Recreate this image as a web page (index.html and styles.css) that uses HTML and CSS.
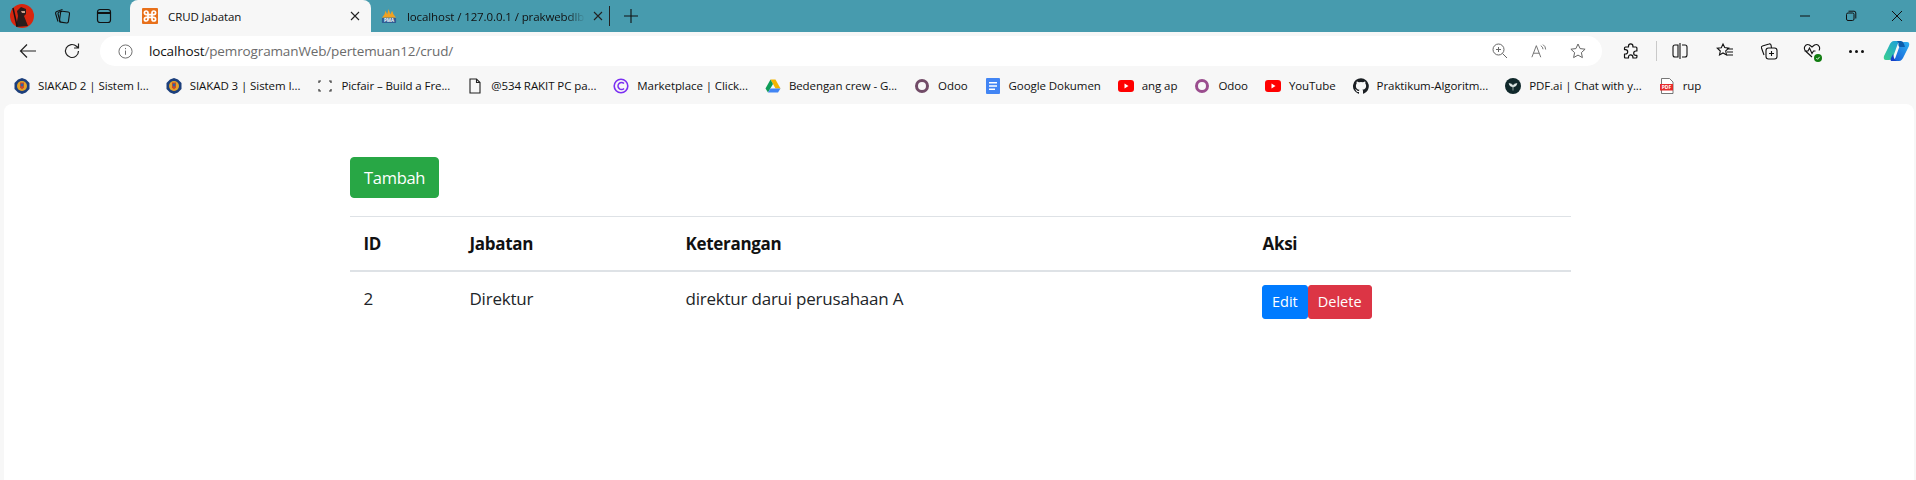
FILE: index.html
```html
<!DOCTYPE html>
<html lang="en">
<head>
  <meta charset="UTF-8" />
  <meta name="viewport" content="width=device-width, initial-scale=1.0"/>
  <title>CRUD Jabatan</title>
  <link rel="stylesheet" href="styles.css">
</head>
<body>

<svg class="defs" width="0" height="0">
  <symbol id="crest" viewBox="0 0 16 16">
    <path d="M8 0 L12 1.5 L15.5 5 L15.5 11 L12 14.5 L8 16 L4 14.5 L.5 11 L.5 5 L4 1.5 Z" fill="#1c3f7c"/>
    <circle cx="8" cy="8" r="5" fill="#e3a32a"/>
    <path d="M6 4.5h4v5l-2 2-2-2z" fill="#c9492b"/>
    <circle cx="8" cy="7" r="1.4" fill="#2a66a8"/>
  </symbol>
  <symbol id="yt" viewBox="0 0 16 16">
    <rect y="2" width="16" height="12" rx="3" fill="#f00"/>
    <path d="M6.5 5.5v5l4-2.5z" fill="#fff"/>
  </symbol>
</svg>

<!-- tab strip -->
<div class="tabstrip">
  <div class="strip-left">
    <svg class="avatar" viewBox="0 0 24 24">
      <circle cx="12" cy="12" r="12" fill="#d8260f"/>
      <path d="M6 23 L8 12 L7 7 L11 3 L16 5 L16 10 L14 12 L18 22 Z" fill="#2a1c1c"/>
      <path d="M3 4 L7 22" stroke="#1b1212" stroke-width="1.5"/>
      <path d="M11 7h4v2h-3z" fill="#c9a08c"/>
    </svg>
    <svg class="ico strip-ico" viewBox="0 0 18 18" fill="none" stroke="#111" stroke-width="1.1">
      <rect x="7" y="4.5" width="9" height="11" rx="1.5" transform="rotate(8 11 10)"/>
      <path d="M5 14.5 L2.6 6.5 Q2.3 5 3.8 4.4 L9.5 2.5"/>
      <path d="M7.3 15.5 L5 7 Q4.8 5.6 6.2 5.1 L9 4.2"/>
    </svg>
    <svg class="ico strip-ico" viewBox="0 0 18 18" fill="none" stroke="#111" stroke-width="1.2">
      <rect x="2.5" y="2.5" width="13" height="13" rx="2.5"/>
      <path d="M2.5 6h13" stroke-width="2"/>
    </svg>
  </div>

  <div class="tab tab-active">
    <svg class="fav" viewBox="0 0 16 16">
      <rect width="16" height="16" rx="1" fill="#e8701a"/>
      <path d="M6 6V4.800a1.800 1.800 0 1 0-1.800 1.800H11.800a1.800 1.800 0 1 0-1.800-1.800V11.200a1.800 1.800 0 1 0 1.800-1.800H4.200a1.800 1.800 0 1 0 1.800 1.800z" fill="none" stroke="#fff" stroke-width="1.700"/>
    </svg>
    <span class="tab-title">CRUD Jabatan</span>
    <svg class="tab-x" viewBox="0 0 10 10" stroke="#222" stroke-width="1.1"><path d="M1 1l8 8M9 1l-8 8"/></svg>
  </div>

  <div class="tab tab-other">
    <svg class="fav" viewBox="0 0 18 16">
      <path d="M1 10 L4 6 L5 2 L7 6 L8.5 0 L10.5 6 L12.5 2 L14 6 L17 10 Z" fill="#f0a221"/>
      <rect x="1" y="10" width="16" height="6" rx="1" fill="#2f5d94"/>
      <text x="9" y="15" class="pma">PMA</text>
    </svg>
    <span class="tab-title tab-fade">localhost / 127.0.0.1 / prakwebdlb</span>
    <svg class="tab-x" viewBox="0 0 10 10" stroke="#222" stroke-width="1.1"><path d="M1 1l8 8M9 1l-8 8"/></svg>
  </div>

  <div class="tab-sep"></div>
  <svg class="ico new-tab" viewBox="0 0 16 16" stroke="#111" stroke-width="1.1"><path d="M8 1v14M1 8h14"/></svg>

  <div class="winctl">
    <svg class="ico" viewBox="0 0 12 12" stroke="#111" stroke-width="1"><path d="M1 6h10"/></svg>
    <svg class="ico" viewBox="0 0 12 12" fill="none" stroke="#111" stroke-width="1">
      <rect x="1.5" y="3" width="7.5" height="7.5" rx="1.5"/>
      <path d="M3.5 1.2h5.5q1.8 0 1.8 1.8v5.5"/>
    </svg>
    <svg class="ico" viewBox="0 0 12 12" stroke="#111" stroke-width="1"><path d="M1 1l10 10M11 1l-10 10"/></svg>
  </div>
</div>

<!-- toolbar -->
<div class="toolbar">
  <svg class="ico nav-ico" viewBox="0 0 18 18" fill="none" stroke="#222" stroke-width="1.2"><path d="M17 9H1.5M8 2.5L1.5 9 8 15.5"/></svg>
  <svg class="ico nav-ico" viewBox="0 0 18 18" fill="none" stroke="#222" stroke-width="1.2"><path d="M15.5 9a6.5 6.5 0 1 1-2-4.7L15.5 6M15.5 1.5V6H11"/></svg>

  <div class="addressbar">
    <svg class="ico info" viewBox="0 0 16 16" fill="none" stroke="#666" stroke-width="1"><circle cx="8" cy="8" r="7"/><path d="M8 7v4.5M8 4.2v1.3"/></svg>
    <div class="url"><span class="host">localhost</span>/pemrogramanWeb/pertemuan12/crud/</div>
    <div class="addr-icons">
      <svg class="ico" viewBox="0 0 16 16" fill="none" stroke="#666" stroke-width="1"><circle cx="6.5" cy="6.5" r="5.5"/><path d="M10.5 10.5L15 15M6.5 4v5M4 6.5h5"/></svg>
      <svg class="ico" viewBox="0 0 18 16" fill="none" stroke="#666" stroke-width="1"><path d="M1 15L6 2l5 13M2.8 10.5h6.4"/><path d="M11 2q2.5 1.5 2.5 4M13.5 .8q3 2 3 5.5"/></svg>
      <svg class="ico" viewBox="0 0 16 16" fill="none" stroke="#666" stroke-width="1"><path d="M8 1l2.1 4.6 5 .6-3.7 3.4 1 5L8 12.1l-4.4 2.5 1-5L.9 6.2l5-.6z"/></svg>
    </div>
  </div>

  <div class="tools">
    <svg class="ico tool-ext" viewBox="0 0 18 18" fill="none" stroke="#111" stroke-width="1.2" stroke-linejoin="round"><path d="M6.500 4a2.200 2.200 0 0 1 4.400 0v1h3q1 0 1 1v3h-1a2.200 2.200 0 0 0 0 4.400h1v1.600q0 1-1 1h-3v-1a2.200 2.200 0 0 0-4.400 0v1h-3q-1 0-1-1v-3h1a2.200 2.200 0 0 0 0-4.400h-1V6q0-1 1-1h3z"/></svg>
    <div class="tool-sep"></div>
    <svg class="ico tool-split" viewBox="0 0 18 18" fill="none" stroke="#111" stroke-width="1.1"><path d="M7 3H4Q2 3 2 5v8q0 2 2 2h3zM9 1v16M11 3h3q2 0 2 2v8q0 2-2 2h-3"/></svg>
    <svg class="ico tool-fav" viewBox="0 0 18 18" fill="none" stroke="#111" stroke-width="1.1"><path d="M7 2l1.700 3.600 4 .5-3 2.800.8 4L7 11l-3.500 2 .8-4-3-2.800 4-.5zM11 7h6M11 10h6M10 13h7"/></svg>
    <svg class="ico tool-col" viewBox="0 0 18 18" fill="none" stroke="#111" stroke-width="1.1"><rect x="6" y="6" width="11" height="11" rx="2.500"/><path d="M11.500 9v5M9 11.500h5M4 13L1.500 6Q1 4.500 2.500 4L9 2q1.500-.5 2 1l.5 3"/></svg>
    <span class="tool-health">
      <svg class="ico" viewBox="0 0 18 18" fill="none" stroke="#111" stroke-width="1.1"><path d="M9 15L3 9.500Q.5 7 1.800 4.500 3.500 1.500 6.500 3L9 5l2.500-2q3-1.500 4.700 1.500 1 2-.2 4M1.500 9H5l1.500-3L9 11.500l1.500-2.500h2"/></svg>
      <svg class="health-dot" viewBox="0 0 8 8"><circle cx="4" cy="4" r="4" fill="#107c10"/><path d="M2.300 4.100l1.200 1.200 2.200-2.500" fill="none" stroke="#fff" stroke-width=".9"/></svg>
    </span>
    <span class="tool-more"><i></i><i></i><i></i></span>
    <svg class="copilot" viewBox="0 0 27 22">
      <defs>
        <linearGradient id="cg1" x1="0" y1="1" x2="1" y2="0"><stop offset="0" stop-color="#3ad08e"/><stop offset="1" stop-color="#1a9be0"/></linearGradient>
        <linearGradient id="cg2" x1="1" y1="0" x2="0" y2="1"><stop offset="0" stop-color="#2cb0f0"/><stop offset="1" stop-color="#1558d6"/></linearGradient>
      </defs>
      <path d="M11 1H18Q15 2 14 6L10 17Q9 20 6 20H3Q0 20 1 16L6 6Q8 1 11 1Z" fill="url(#cg1)"/>
      <path d="M16 21H9Q12 20 13 16L17 5Q18 2 21 2H24Q27 2 26 6L21 16Q19 21 16 21Z" fill="url(#cg2)"/>
      <path d="M14 1H18Q20 1 21 4L22 7H17Q15 7 15.500 3Z" fill="#0b5cab"/>
      <path d="M8 21H14Q12 21 11 18L10 14 8 18Q7 20 8 21Z" fill="#1440c8"/>
    </svg>
  </div>
</div>

<!-- favorites -->
<div class="favbar">
  <a class="bm"><svg class="fav"><use href="#crest"/></svg>SIAKAD 2 | Sistem I...</a>
  <a class="bm"><svg class="fav"><use href="#crest"/></svg>SIAKAD 3 | Sistem I...</a>
  <a class="bm"><svg class="fav" viewBox="0 0 16 16" fill="none" stroke="#333" stroke-width="1.2"><path d="M2 5V3h2M12 3h2v2M14 11v2h-2M4 13H2v-2"/></svg>Picfair – Build a Fre...</a>
  <a class="bm"><svg class="fav" viewBox="0 0 16 16" fill="none" stroke="#222" stroke-width="1.1"><path d="M3 1h6.500L13 4.500V15H3zM9.500 1v3.500H13"/></svg>@534 RAKIT PC pa...</a>
  <a class="bm"><svg class="fav" viewBox="0 0 16 16" fill="none" stroke="#7b2ff2" stroke-width="1.6"><circle cx="8" cy="8" r="6.800"/><path d="M11 5.500a3.500 3.500 0 1 0 0 5"/></svg>Marketplace | Click...</a>
  <a class="bm"><svg class="fav" viewBox="0 0 16 16"><path d="M5.500 1.500h5L15.500 10.500h-5z" fill="#f4b400"/><path d="M5.500 1.500L.5 10.500 3 14.500 8 6z" fill="#0f9d58"/><path d="M3 14.500h10l2.500-4H5.500z" fill="#4285f4"/></svg>Bedengan crew - G...</a>
  <a class="bm"><svg class="fav" viewBox="0 0 16 16" fill="none" stroke="#714b67" stroke-width="3"><circle cx="8" cy="8" r="5.500"/></svg>Odoo</a>
  <a class="bm"><svg class="fav" viewBox="0 0 16 16"><path d="M2 0h12q1 0 1 1v14q0 1-1 1H2q-1 0-1-1V1q0-1 1-1z" fill="#4285f4"/><path d="M4 4h8v1.500H4zM4 7.300h8v1.500H4zM4 10.500h6V12H4z" fill="#fff"/></svg>Google Dokumen</a>
  <a class="bm"><svg class="fav"><use href="#yt"/></svg>ang ap</a>
  <a class="bm"><svg class="fav" viewBox="0 0 16 16" fill="none" stroke="#9a4d8e" stroke-width="3"><circle cx="8" cy="8" r="5.500"/></svg>Odoo</a>
  <a class="bm"><svg class="fav"><use href="#yt"/></svg>YouTube</a>
  <a class="bm"><svg class="fav" viewBox="0 0 16 16"><path d="M8 .2a8 8 0 0 0-2.500 15.600c.4.100.5-.2.500-.4v-1.400c-2.200.5-2.700-1-2.700-1-.4-.9-.9-1.200-.9-1.200-.7-.5.100-.5.100-.5.800.100 1.200.8 1.200.8.700 1.200 1.900.9 2.300.7.100-.5.300-.9.500-1.100-1.800-.2-3.600-.9-3.600-4 0-.9.300-1.600.8-2.100-.1-.2-.4-1 .1-2.100 0 0 .7-.2 2.200.8a7.600 7.600 0 0 1 4 0c1.500-1 2.200-.8 2.200-.8.400 1.100.2 1.900.1 2.100.5.600.8 1.300.8 2.100 0 3.100-1.900 3.700-3.700 3.900.3.300.6.800.6 1.500v2.200c0 .2.100.5.600.4A8 8 0 0 0 8 .2z" fill="#1b1f23"/></svg>Praktikum-Algoritm...</a>
  <a class="bm"><svg class="fav" viewBox="0 0 16 16"><circle cx="8" cy="8" r="8" fill="#10282b"/><path d="M4 5.500q2.500 0 4 2 1.500-2 4-2-.5 3-4 3.500-3.500-.5-4-3.500zM8 9v3.500" fill="#dfe8e6" stroke="#dfe8e6" stroke-width=".6"/></svg>PDF.ai | Chat with y...</a>
  <a class="bm"><svg class="fav" viewBox="0 0 16 16"><path d="M2.500 .5h8L14 4v11.500H2.500z" fill="#fff" stroke="#555" stroke-width=".8"/><rect x="1" y="6" width="13" height="6.500" fill="#e62b2b"/><text x="7.500" y="11.200" class="pdf">PDF</text></svg>rup</a>
</div>

<!-- page -->
<div class="page">
  <div class="container">
    <button class="btn btn-tambah">Tambah</button>
    <table class="table">
      <thead>
        <tr>
          <th class="col-id">ID</th>
          <th class="col-jabatan">Jabatan</th>
          <th class="col-ket">Keterangan</th>
          <th>Aksi</th>
        </tr>
      </thead>
      <tbody>
        <tr>
          <td>2</td>
          <td>Direktur</td>
          <td>direktur darui perusahaan A</td>
          <td class="aksi">
            <button class="btn btn-sm btn-edit">Edit</button><button class="btn btn-sm btn-delete">Delete</button>
          </td>
        </tr>
      </tbody>
    </table>
  </div>
</div>

</body>
</html>
```

FILE: styles.css
```css
* {
  box-sizing: border-box;
}

html, body {
  margin: 0;
  height: 480px;
  overflow: hidden;
}

body {
  display: flex;
  flex-direction: column;
  background-color: #f7f7f7;
  font-family: "Open Sans", "Noto Sans", sans-serif;
  color: #111;
}

.defs {
  display: block;
  height: 0;
}

.ico {
  width: 16px;
  height: 16px;
  flex: none;
}

.fav {
  width: 16px;
  height: 16px;
  flex: none;
}

.pma {
  font-size: 5px;
  font-weight: 700;
  fill: #fff;
  text-anchor: middle;
}

.pdf {
  font-size: 5px;
  font-weight: 700;
  fill: #fff;
  text-anchor: middle;
}

/* tab strip */
.tabstrip {
  height: 32px;
  display: flex;
  align-items: center;
  background-color: #479bae;
  flex: none;
}

.strip-left {
  width: 130px;
  display: flex;
  align-items: center;
  padding-left: 10px;
  flex: none;
}

.avatar {
  width: 24px;
  height: 24px;
}

.strip-ico {
  width: 18px;
  height: 18px;
  margin-left: 19px;
}

.strip-ico + .strip-ico {
  margin-left: 24px;
}

.tab {
  height: 32px;
  display: flex;
  align-items: center;
  flex: none;
  font-size: 11.5px;
  letter-spacing: -0.1px;
}

.tab-active {
  width: 241px;
  padding: 0 11px 0 12px;
  background-color: #f7f7f7;
  border-radius: 8px 8px 0 0;
}

.tab-other {
  width: 238px;
  padding: 0 6px 0 10px;
}

.tab-title {
  flex: 1;
  margin-left: 10px;
  white-space: nowrap;
  overflow: hidden;
}

.tab-fade {
  -webkit-mask-image: linear-gradient(to right, #000 90%, transparent);
  mask-image: linear-gradient(to right, #000 90%, transparent);
}

.tab-x {
  width: 10px;
  height: 10px;
  flex: none;
  margin-left: 8px;
}

.tab-sep {
  width: 1px;
  height: 20px;
  background-color: #222;
  flex: none;
}

.new-tab {
  margin-left: 13px;
}

.winctl {
  margin-left: auto;
  display: flex;
  align-items: center;
  gap: 34px;
  padding-right: 13px;
}

.winctl .ico {
  width: 12px;
  height: 12px;
}

/* toolbar */
.toolbar {
  height: 38px;
  display: flex;
  align-items: center;
  flex: none;
  padding: 0 8px 0 19px;
}

.nav-ico {
  width: 18px;
  height: 18px;
  margin-right: 26px;
}

.addressbar {
  width: 1502px;
  height: 30px;
  margin-left: -7px;
  padding: 0 16px 0 18px;
  display: flex;
  align-items: center;
  background-color: #fff;
  border-radius: 15px;
  flex: none;
}

.info {
  width: 15px;
  height: 15px;
}

.url {
  margin-left: 16px;
  font-size: 13.5px;
  letter-spacing: -0.13px;
  color: #6b6b6b;
  white-space: nowrap;
}

.host {
  color: #111;
}

.addr-icons {
  margin-left: auto;
  display: flex;
  align-items: center;
  gap: 23px;
}

.tools {
  flex: 1;
  display: flex;
  align-items: center;
  padding-left: 20px;
}

.tools .ico {
  width: 18px;
  height: 18px;
}

.tool-sep {
  width: 1px;
  height: 20px;
  background-color: #c9c9c9;
  margin: 0 14px 0 16px;
}

.tool-fav {
  margin-left: 27px;
}

.tool-col {
  margin-left: 26px;
}

.tool-health {
  position: relative;
  margin-left: 25px;
  display: flex;
}

.health-dot {
  position: absolute;
  right: -1px;
  bottom: -2px;
  width: 8px;
  height: 8px;
}

.tool-more {
  display: flex;
  gap: 3px;
  margin-left: 28px;
}

.tool-more i {
  width: 3px;
  height: 3px;
  background-color: #111;
  border-radius: 50%;
}

.copilot {
  width: 27px;
  height: 22px;
  margin-left: 19px;
  flex: none;
}

/* favorites */
.favbar {
  height: 34px;
  display: flex;
  align-items: center;
  gap: 17px;
  padding: 0 0 3px 14px;
  flex: none;
  font-size: 11.5px;
  letter-spacing: -0.08px;
}

.bm {
  display: flex;
  align-items: center;
  gap: 8px;
  white-space: nowrap;
  color: #111;
}

/* page */
.page {
  flex: 1;
  margin: 0 2px 0 4px;
  background-color: #fff;
  border-radius: 8px 8px 0 0;
  padding-top: 53px;
}

.container {
  width: 1221px;
  margin-left: 346px;
  color: #212529;
}

.btn {
  font-family: inherit;
  font-size: 16.5px;
  letter-spacing: -0.3px;
  line-height: 27px;
  padding: 6px 13px;
  color: #fff;
  border: 1px solid transparent;
  border-radius: 4px;
}

.btn-tambah {
  display: block;
  width: 89px;
  background-color: #28a745;
  border-color: #28a745;
  margin-bottom: 18px;
}

.btn-sm {
  font-size: 14.5px;
  letter-spacing: 0;
  line-height: 22px;
  padding: 5px 9px;
  border-radius: 3px;
}

.btn-edit {
  background-color: #007bff;
  border-color: #007bff;
}

.btn-delete {
  background-color: #dc3545;
  border-color: #dc3545;
}

.table {
  width: 100%;
  border-collapse: collapse;
  table-layout: fixed;
}

.table th, .table td {
  padding: 13px 13.5px;
  text-align: left;
  vertical-align: top;
  line-height: 27px;
  font-size: 17px;
  letter-spacing: -0.22px;
}

.table th {
  border-top: 1px solid #dee2e6;
  border-bottom: 2px solid #dee2e6;
  font-weight: 700;
  letter-spacing: -0.3px;
  color: #111;
}

.col-id {
  width: 106px;
}

.col-jabatan {
  width: 216px;
}

.col-ket {
  width: 577px;
}

.table .aksi {
  padding-left: 13px;
  font-size: 0;
}
```
